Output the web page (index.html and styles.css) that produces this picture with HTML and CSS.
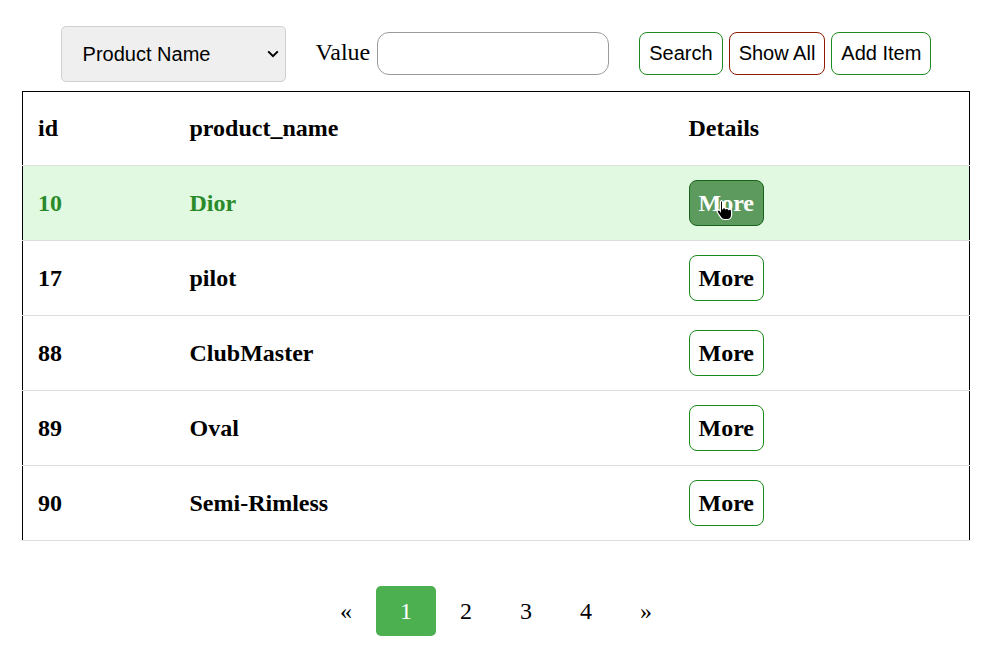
FILE: index.html
```html
<!DOCTYPE html>
<html>
<head>
<meta charset="utf-8">
<link rel="stylesheet" href="styles.css">
</head>
<body>
<div class="toolbar">
  <span class="select-wrap">
    <select class="field-select">
      <option>Product Name</option>
    </select>
    <svg class="chev" width="12" height="8" viewBox="0 0 12 8"><path d="M1.2 1.4 6 6.2l4.8-4.8" fill="none" stroke="#000" stroke-width="2"/></svg>
  </span>
  <label class="value-label">Value</label>
  <input class="value-input" type="text">
  <div class="actions">
    <button class="btn btn-green">Search</button>
    <button class="btn btn-red">Show All</button>
    <button class="btn btn-green">Add Item</button>
  </div>
</div>
<table class="grid">
  <colgroup>
    <col class="c-id"><col class="c-name"><col class="c-det">
  </colgroup>
  <thead>
    <tr><th>id</th><th>product_name</th><th>Details</th></tr>
  </thead>
  <tbody>
    <tr class="hover"><td>10</td><td>Dior</td><td><span class="more-wrap"><button class="more more-hover">More</button><svg class="cursor" width="18" height="22" viewBox="0 0 18 22"><path d="M5 1.5c1 0 1.6.7 1.6 1.6v6.2c.4-.5 1-.7 1.6-.6.8.1 1.2.6 1.4 1.1.4-.4 1-.6 1.6-.5.8.1 1.2.7 1.4 1.2.4-.3 1-.4 1.5-.3 1 .2 1.5 1 1.5 2v3.5c0 2.5-1.7 4.8-4.5 4.8H8.4c-1.6 0-2.8-.8-3.7-2.1L1.5 13.5c-.6-.9-.3-2 .5-2.4.8-.4 1.6-.1 2.2.6l.2.3V3.1c0-.9.6-1.6 1.6-1.6z" fill="#000" stroke="#fff" stroke-width="1.2"/></svg></span></td></tr>
    <tr><td>17</td><td>pilot</td><td><button class="more">More</button></td></tr>
    <tr><td>88</td><td>ClubMaster</td><td><button class="more">More</button></td></tr>
    <tr><td>89</td><td>Oval</td><td><button class="more">More</button></td></tr>
    <tr><td>90</td><td>Semi-Rimless</td><td><button class="more">More</button></td></tr>
  </tbody>
</table>
<div class="pager">
  <span class="page">&laquo;</span>
  <span class="page active">1</span>
  <span class="page">2</span>
  <span class="page">3</span>
  <span class="page">4</span>
  <span class="page">&raquo;</span>
</div>
</body>
</html>
```

FILE: styles.css
```css
html, body {
  margin: 0;
  padding: 0;
  background: #fff;
}
body {
  font-family: "Liberation Serif", "Times New Roman", serif;
  color: #000;
  width: 990px;
}
.toolbar {
  display: flex;
  align-items: flex-start;
  justify-content: center;
  padding-top: 26px;
  height: 56px;
  padding-left: 2px;
}
.select-wrap {
  position: relative;
  display: block;
}
.field-select {
  display: block;
  appearance: none;
  -webkit-appearance: none;
  width: 225px;
  height: 56px;
  font-family: "Liberation Sans", Arial, sans-serif;
  font-size: 20px;
  padding: 0 30px 0 21px;
  background-color: #efefef;
  border: 1px solid #cfcfcf;
  border-radius: 5px;
  color: #000;
}
.chev {
  position: absolute;
  left: 206px;
  top: 24px;
  pointer-events: none;
}
.value-label {
  font-size: 24px;
  margin-left: 30px;
  margin-right: 7px;
  line-height: 28px;
  margin-top: 12px;
}
.value-input {
  width: 232px;
  height: 43px;
  margin-top: 6px;
  box-sizing: border-box;
  border: 1px solid #9a9a9a;
  border-radius: 12px;
  font-size: 18px;
  padding: 0 10px;
}
.actions {
  display: flex;
  gap: 6px;
  margin-left: 30px;
  margin-top: 6px;
}
.btn {
  height: 43px;
  box-sizing: border-box;
  background: #fff;
  font-family: "Liberation Sans", Arial, sans-serif;
  font-size: 20px;
  color: #000;
  padding: 0 9px;
  border-radius: 8px;
}
.btn-green { border: 1px solid #1f8a1f; }
.btn-red { border: 1px solid #8b1a00; }

.grid {
  margin-top: 9px;
  margin-left: 22px;
  width: 947px;
  border-collapse: collapse;
  border: 1px solid #000;
  table-layout: fixed;
}
.c-id { width: 152px; }
.c-name { width: 499px; }
.c-det { width: 296px; }
.grid th, .grid td {
  height: 75px;
  padding: 0 15px;
  text-align: left;
  vertical-align: middle;
  font-size: 24px;
  font-weight: bold;
  border-bottom: 1px solid #dddddd;
  box-sizing: border-box;
}
.grid th {
  height: 74px;
}
.grid tr.hover td {
  background: #e0f9e0;
  color: #2a8a2a;
}
.more {
  font-family: "Liberation Serif", "Times New Roman", serif;
  font-size: 24px;
  font-weight: bold;
  color: #000;
  background: #fff;
  border: 1px solid #1a8a1a;
  border-radius: 8px;
  padding: 8px 9px;
  line-height: 28px;
  display: block;
}
.more-hover {
  background: #5c9a5e;
  color: #fff;
  border-color: #17631a;
}
.more-wrap {
  position: relative;
  display: inline-block;
}
.cursor {
  position: absolute;
  left: 27px;
  top: 19px;
}
.pager {
  display: flex;
  justify-content: center;
  margin-top: 45px;
  padding-left: 2px;
}
.page {
  width: 60px;
  height: 50px;
  display: flex;
  align-items: center;
  justify-content: center;
  font-size: 24px;
  border-radius: 5px;
}
.page.active {
  background: #4caf50;
  color: #fff;
}
```
